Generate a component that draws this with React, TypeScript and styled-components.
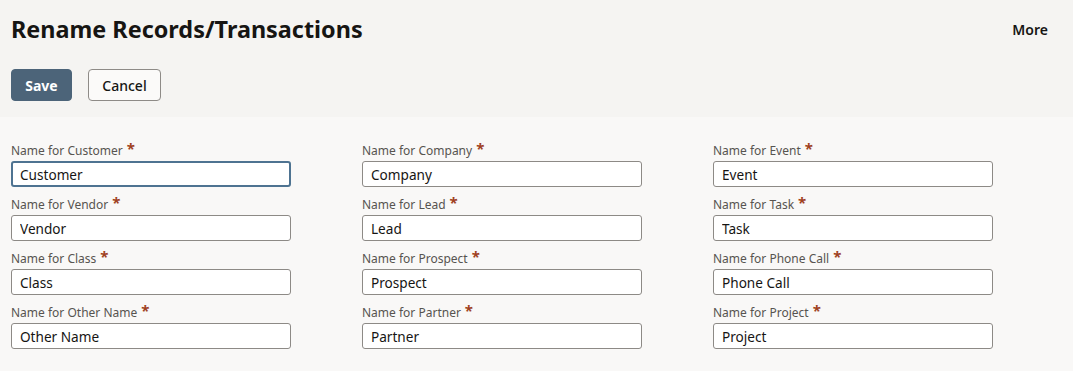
import React from "react";
import styled, { createGlobalStyle } from "styled-components";

const GlobalStyle = createGlobalStyle`
  body {
    margin: 0;
    background: #f9f8f7;
    font-family: "Noto Sans", "Open Sans", sans-serif;
    color: #161513;
  }
`;

const Page = styled.div`
  width: 1073px;
  min-height: 371px;
`;

const Header = styled.header`
  background: #f5f4f2;
  padding: 13px 11px 16px;
  height: 117px;
  box-sizing: border-box;
`;

const TitleRow = styled.div`
  display: flex;
  justify-content: space-between;
  align-items: center;
`;

const Title = styled.h1`
  margin: 0;
  font-size: 23.4px;
  font-weight: 700;
  line-height: 32px;
`;

const MoreLink = styled.span`
  font-size: 14px;
  font-weight: 600;
  margin-right: 14px;
`;

const Actions = styled.div`
  display: flex;
  gap: 16px;
  margin-top: 24px;
`;

const Button = styled.button<{ $primary?: boolean }>`
  height: 32px;
  min-width: ${(p) => (p.$primary ? 61 : 73)}px;
  padding: 0 12px;
  border-radius: 4px;
  font-family: inherit;
  font-size: 14px;
  font-weight: ${(p) => (p.$primary ? 700 : 500)};
  border: 1px solid ${(p) => (p.$primary ? "#4c6479" : "#8e8b87")};
  background: ${(p) => (p.$primary ? "#4c6479" : "#fbfaf9")};
  color: ${(p) => (p.$primary ? "#fff" : "#161513")};
`;

const Form = styled.div`
  display: grid;
  grid-template-columns: repeat(3, 280px);
  column-gap: 71px;
  row-gap: 7px;
  padding: 23px 11px 0;
`;

const Field = styled.div`
  display: flex;
  flex-direction: column;
`;

const Label = styled.label`
  font-size: 12px;
  color: #575450;
  line-height: 17px;
  height: 21px;
  padding-top: 2px;
  box-sizing: border-box;
  display: flex;
  align-items: flex-start;
`;

const Required = styled.span`
  color: #a0421f;
  font-size: 15px;
  font-weight: 700;
  margin-left: 4px;
  line-height: 12px;
`;

const Input = styled.input<{ $focused?: boolean }>`
  box-sizing: border-box;
  width: 280px;
  height: 26px;
  border-radius: 3px;
  border: ${(p) => (p.$focused ? "2px solid #4e7391" : "1px solid #8d8a86")};
  padding: 0 ${(p) => (p.$focused ? 7 : 8)}px;
  font-family: inherit;
  font-size: 13.6px;
  color: #161513;
  background: #fff;
  outline: none;
`;

const fields = [
  ["Customer", "Company", "Event"],
  ["Vendor", "Lead", "Task"],
  ["Class", "Prospect", "Phone Call"],
  ["Other Name", "Partner", "Project"],
];

export default function App() {
  return (
    <Page>
      <GlobalStyle />
      <Header>
        <TitleRow>
          <Title>Rename Records/Transactions</Title>
          <MoreLink>More</MoreLink>
        </TitleRow>
        <Actions>
          <Button $primary>Save</Button>
          <Button>Cancel</Button>
        </Actions>
      </Header>
      <Form>
        {fields.flat().map((name, i) => (
          <Field key={name}>
            <Label>
              Name for {name}
              <Required>*</Required>
            </Label>
            <Input defaultValue={name} $focused={i === 0} />
          </Field>
        ))}
      </Form>
    </Page>
  );
}
